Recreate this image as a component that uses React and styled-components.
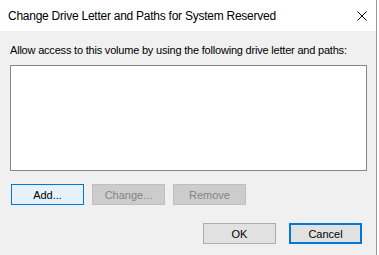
import React from 'react';
import styled, { createGlobalStyle } from 'styled-components';

const Global = createGlobalStyle`
    html, body {
        margin: 0;
        padding: 0;
        background: #ffffff;
        overflow: hidden;
    }
    body {
        font-family: "Liberation Sans", Arial, sans-serif;
    }
`;

const Dialog = styled.div`
    width: 376px;
    height: 255px;
    display: flex;
    flex-direction: column;
    border-right: 1px solid #9a9a9a;
    background: #f0f0f0;
`;

const TitleBar = styled.div`
    height: 31px;
    display: flex;
    align-items: center;
    justify-content: space-between;
    background: #ffffff;
    padding: 0 9px 0 8px;

    .title{
        font-size: 12px;
        letter-spacing: -0.25px;
        color: #000000;
        white-space: nowrap;
    }
`;

const Body = styled.div`
    flex: 1;
    display: flex;
    flex-direction: column;
    padding: 11px 9px 0 10px;
`;

const Label = styled.div`
    font-size: 11px;
    letter-spacing: -0.2px;
    color: #000000;
    line-height: 16px;
    white-space: nowrap;
`;

const ListBox = styled.div`
    margin-top: 7px;
    height: 104px;
    background: #ffffff;
    border: 1px solid #828790;
`;

const Row = styled.div`
    display: flex;
    gap: ${(p) => (p.end ? '13px' : '8px')};
    margin-top: ${(p) => (p.end ? '18px' : '13px')};
    padding-left: 1px;
    justify-content: ${(p) => (p.end ? 'flex-end' : 'flex-start')};
    padding-right: ${(p) => (p.end ? '5px' : '0')};
`;

const Button = styled.div`
    box-sizing: border-box;
    width: 73px;
    height: ${(p) => (p.small ? '20px' : '21px')};
    display: flex;
    align-items: center;
    justify-content: center;
    font-size: 11px;
    color: ${(p) => (p.disabled ? '#838383' : '#000000')};
    background: ${(p) => (p.focused ? '#e5f1fb' : p.disabled ? '#cccccc' : '#e1e1e1')};
    border: ${(p) => (p.primary ? '2px' : '1px')} solid
        ${(p) => (p.focused || p.primary ? '#0078d7' : p.disabled ? '#bfbfbf' : '#adadad')};
`;

const CloseIcon = () => (
    <svg width="10" height="10" viewBox="0 0 10 10">
        <path d="M0.5 0.5 L9.5 9.5 M9.5 0.5 L0.5 9.5" stroke="#000" strokeWidth="1" />
    </svg>
);

const App = () => {
    return (
        <>
            <Global />
            <Dialog>
                <TitleBar>
                    <span className="title">Change Drive Letter and Paths for System Reserved</span>
                    <CloseIcon />
                </TitleBar>
                <Body>
                    <Label>Allow access to this volume by using the following drive letter and paths:</Label>
                    <ListBox />
                    <Row>
                        <Button focused>Add...</Button>
                        <Button disabled>Change...</Button>
                        <Button disabled>Remove</Button>
                    </Row>
                    <Row end>
                        <Button>OK</Button>
                        <Button primary>Cancel</Button>
                    </Row>
                </Body>
            </Dialog>
        </>
    );
};

export default App;
